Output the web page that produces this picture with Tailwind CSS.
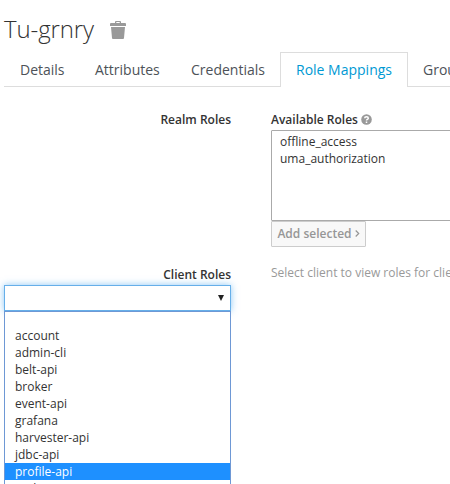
<!DOCTYPE html>
<html lang="en">
<head>
<meta charset="utf-8">
<title>Tu-grnry</title>
<script src="https://cdn.jsdelivr.net/npm/@tailwindcss/browser@4"></script>
</head>
<body class="w-[450px] h-[484px] overflow-hidden bg-white font-['Open_Sans',sans-serif] text-[12px] leading-[17px] text-[#333]">
<h1 class="flex h-[52px] items-start pl-1 pt-3 text-[24px] leading-[33px] font-light">
  <span class="w-[106px] whitespace-nowrap tracking-[-0.1px]">Tu-grnry</span>
  <svg class="mt-[9px] h-[18px] w-4" viewBox="0 0 16 18" fill="#999"><path fill-rule="evenodd" d="M5 2V1Q5 0 6 0h4q1 0 1 1v1h4q1 0 1 1v2H0V3q0-1 1-1zM6.300 2h3.400V1H6.300zM1 6h14l-1 11q0 1-1 1H3q-1 0-1-1z"/></svg>
</h1>
<nav class="ml-1 flex h-[35px] w-[446px] overflow-hidden text-[14px] leading-[34px] text-[#4d5258] whitespace-nowrap *:shrink-0">
  <a class="w-[76px] border-b border-[#ddd] pl-4 pt-px">Details</a>
  <a class="w-[96px] border-b border-[#ddd] pl-[15px] pt-px">Attributes</a>
  <a class="w-[104px] border-b border-[#ddd] pl-[15px] pt-px">Credentials</a>
  <a class="w-[128px] border-x border-t border-[#ddd] pl-[15px] text-[#0099d3]">Role Mappings</a>
  <a class="grow border-b border-[#ddd] pl-[15px] pt-px">Groups</a>
</nav>
<main class="grid w-[450px] grid-cols-[227px_179px] grid-rows-[179px_218px] gap-x-10 overflow-hidden pl-1">
  <label class="pt-6 text-right font-semibold">Realm Roles</label>
  <section class="min-w-0 pt-6">
    <div class="flex h-[19px] items-start gap-[3px] font-semibold whitespace-nowrap"><span>Available Roles</span>
      <svg class="mt-[3px] h-[11px] w-[11px]" viewBox="0 0 11 11"><circle cx="5.500" cy="5.500" r="5.300" fill="#999"/><path d="M3.700 4.300Q3.700 2.700 5.500 2.700T7.300 4.200Q7.300 5 6.400 5.400 5.500 5.800 5.500 6.500M5.500 7.500v1.400" fill="none" stroke="#fff" stroke-width="1.500"/></svg>
    </div>
    <div class="h-[91px] w-[320px] rounded-[1px] border border-[#aaa] pl-2 pt-[2px]"><div>offline_access</div><div>uma_authorization</div></div>
    <button class="flex h-[26px] w-[95px] items-center justify-center gap-[3px] rounded-[1px] border border-[#ccc] bg-[#f8f8f8] pb-px font-semibold text-[#969696] whitespace-nowrap">Add selected<svg class="h-[7px] w-[5px]" viewBox="0 0 5 7"><path d="m.7.5 3 3-3 3" fill="none" stroke="#969696" stroke-width="1.200"/></svg></button>
  </section>
  <div>
    <label class="block h-[19px] text-right font-semibold">Client Roles</label>
    <div class="flex h-[26px] items-center justify-end border border-[#66afe9] pr-[6px] shadow-[0_0_7px_rgba(80,170,240,.65)]"><svg class="h-[6px] w-[6px]" viewBox="0 0 6 6"><path d="M0 0h6L3 6z" fill="#222"/></svg></div>
    <ul class="h-[180px] overflow-hidden border-x border-t border-[#6e98d5] bg-white pt-[15px] *:h-[17px] *:pl-[10px]">
      <li>account</li><li>admin-cli</li><li>belt-api</li><li>broker</li><li>event-api</li><li>grafana</li><li>harvester-api</li><li>jdbc-api</li><li class="bg-[#1e90ff] text-white">profile-api</li><li>realm-management</li>
    </ul>
  </div>
  <p class="-mt-[2px] whitespace-nowrap text-[#999]">Select client to view roles for client</p>
</main>
</body>
</html>
